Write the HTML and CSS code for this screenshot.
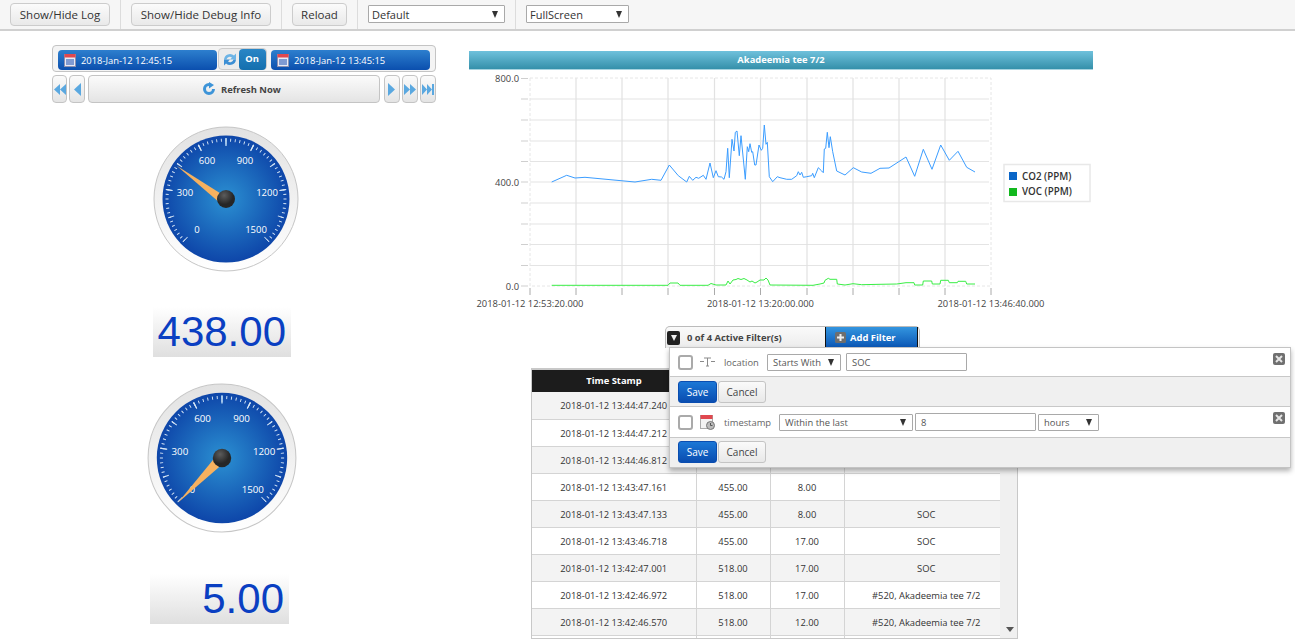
FILE: index.html
```html
<!DOCTYPE html>
<html lang="en">
<head>
    <meta charset="UTF-8">
    <title>Dashboard</title>
    <link rel="stylesheet" href="styles.css">
</head>
<body>
<svg class="defs" width="0" height="0">
    <defs>
        <linearGradient id="bezel" x1="0" y1="0" x2="0" y2="1">
            <stop offset="0" stop-color="#e2e2e2"/>
            <stop offset="1" stop-color="#ffffff"/>
        </linearGradient>
        <radialGradient id="dial">
            <stop offset="0" stop-color="#2b90d2"/>
            <stop offset="1" stop-color="#0e46a9"/>
        </radialGradient>
        <radialGradient id="hub" cx="0.4" cy="0.3">
            <stop offset="0" stop-color="#5c5c5c"/>
            <stop offset="1" stop-color="#262626"/>
        </radialGradient>
        <symbol id="gauge-face" viewBox="0 0 150 150">
            <circle cx="75" cy="75" r="72" fill="url(#bezel)" stroke="#c6c6c6"/>
            <circle cx="75" cy="75" r="63.5" fill="url(#dial)"/>
            <!-- ticks are dashes along one arc: -135deg to 135deg -->
            <path class="tick" d="M33.28 116.72A59 59 0 1 1 116.72 116.72" pathLength="60" stroke-width="3" stroke-dasharray="0.2 0.8" stroke-dashoffset="0.1"/>
            <path class="tick" d="M34.34 115.66A57.5 57.5 0 1 1 115.66 115.66" pathLength="10" stroke-width="6" stroke-dasharray="0.04 0.96" stroke-dashoffset="0.02"/>
            <path class="tick" d="M34.34 115.66A57.5 57.5 0 1 1 115.66 115.66" pathLength="5" stroke-width="7" stroke-dasharray="0.02 0.98" stroke-dashoffset="0.01"/>
            <path d="M75 14V22" stroke="#a9cdee" stroke-width="1.5"/>
            <text class="gauge-num" x="46" y="109">0</text>
            <text class="gauge-num" x="34" y="72">300</text>
            <text class="gauge-num" x="56" y="40">600</text>
            <text class="gauge-num" x="94" y="40">900</text>
            <text class="gauge-num" x="116" y="72">1200</text>
            <text class="gauge-num" x="105" y="109">1500</text>
        </symbol>
        <symbol id="cal" viewBox="0 0 12 14">
            <rect x="0.5" y="1.5" width="11" height="12" fill="#e8eaf4" stroke="#8c90b0"/>
            <rect x="0.5" y="1" width="11" height="3.5" fill="#e0484f"/>
            <rect x="2" y="6" width="8" height="6" fill="#7f9ad2"/>
        </symbol>
    </defs>
</svg>

<div class="toolbar">
    <div class="tool-group"><button class="btn w-log">Show/Hide Log</button></div>
    <div class="tool-group"><button class="btn w-debug">Show/Hide Debug Info</button></div>
    <div class="tool-group"><button class="btn w-reload">Reload</button></div>
    <div class="tool-group"><div class="sel tool-sel w-default">Default</div></div>
    <div class="tool-group no-line"><div class="sel tool-sel w-full">FullScreen</div></div>
</div>

<div class="main">
    <div class="left">
        <div class="time-bar">
            <div class="date-btn">
                <svg class="cal-icon"><use href="#cal"/></svg>
                <span>2018-Jan-12 12:45:15</span>
            </div>
            <div class="auto-toggle">
                <svg class="sync-icon" viewBox="0 0 16 16">
                    <path d="M2 8a6 6 0 0 1 10-4l2-2v6H8l2-2a3.5 3.5 0 0 0-5.500 2z" fill="#6db4e6"/>
                    <path d="M14 8a6 6 0 0 1-10 4l-2 2V8h6l-2 2a3.500 3.500 0 0 0 5.500-2z" fill="#3d8fd4"/>
                </svg>
                <span class="on">On</span>
            </div>
            <div class="date-btn">
                <svg class="cal-icon"><use href="#cal"/></svg>
                <span>2018-Jan-12 13:45:15</span>
            </div>
        </div>
        <div class="nav-row">
            <div class="nav-btn w-15">
                <svg width="12" height="11" viewBox="0 0 12 11"><path class="arrow" d="M6 0V11L0 5.500ZM12 0V11L6 5.500Z"/></svg>
            </div>
            <div class="nav-btn w-16">
                <svg width="7" height="13" viewBox="0 0 7 13"><path class="arrow" d="M7 0V13L0 6.500Z"/></svg>
            </div>
            <div class="nav-btn refresh">
                <svg width="14" height="14" viewBox="0 0 14 14"><path d="M7 1a6 6 0 1 0 6 6H10a3 3 0 1 1-3-3V6.500L12 3 7 0Z" fill="#3d94d8"/></svg>
                <span>Refresh Now</span>
            </div>
            <div class="nav-btn w-16">
                <svg width="7" height="13" viewBox="0 0 7 13"><path class="arrow" d="M0 0V13L7 6.500Z"/></svg>
            </div>
            <div class="nav-btn w-16">
                <svg width="12" height="11" viewBox="0 0 12 11"><path class="arrow" d="M0 0V11L6 5.500ZM6 0V11L12 5.500Z"/></svg>
            </div>
            <div class="nav-btn w-16">
                <svg width="12" height="11" viewBox="0 0 12 11"><path class="arrow" d="M0 0V11L5 5.500ZM5 0V11L10 5.500Z"/><rect class="arrow" x="10" width="2" height="11"/></svg>
            </div>
        </div>

        <svg class="gauge gauge-one" viewBox="0 0 150 150">
            <use href="#gauge-face"/>
            <polygon class="needle" points="25.700,41.700 72,71 69,79"/>
            <circle cx="75" cy="75" r="9" fill="url(#hub)"/>
        </svg>
        <div class="lcd lcd-one">438.00</div>

        <svg class="gauge gauge-two" viewBox="0 0 150 150">
            <use href="#gauge-face"/>
            <polygon class="needle" points="32,118.500 71,71 79,78"/>
            <circle cx="75" cy="75" r="9" fill="url(#hub)"/>
        </svg>
        <div class="lcd lcd-two">5.00</div>
    </div>

    <div class="right">
        <div class="chart-title">Akadeemia tee 7/2</div>
        <svg class="chart" width="624" height="243" viewBox="469 70 624 243">
            <g class="grid-h">
                <path d="M530 99H989M530 120H989M530 141H989M530 161.500H989M530 182H989M530 203H989M530 224H989M530 244.500H989M530 265.500H989"/>
            </g>
            <g class="grid-v">
                <path d="M576 78V286M622 78V286M668 78V286M714.500 78V286M760.500 78V286M807 78V286M853 78V286M899 78V286M945 78V286"/>
            </g>
            <path class="grid-edge" d="M530 78H991V286H530Z"/>
            <path class="tick-y" d="M521 78.500H528M521 99H528M521 120H528M521 141H528M521 161.500H528M521 182H528M521 203H528M521 224H528M521 244.500H528M521 265.500H528M521 286H528"/>
            <path class="tick-x" d="M530 288V295M576 288V295M622 288V295M668 288V295M714.500 288V295M760.500 288V295M807 288V295M853 288V295M899 288V295M945 288V295M991 288V295"/>
            <text class="axis end" x="519" y="82">800.0</text>
            <text class="axis end" x="519" y="186">400.0</text>
            <text class="axis end" x="519" y="290">0.0</text>
            <text class="axis mid" x="530" y="307">2018-01-12 12:53:20.000</text>
            <text class="axis mid" x="760.500" y="307">2018-01-12 13:20:00.000</text>
            <text class="axis mid" x="991" y="307">2018-01-12 13:46:40.000</text>
            <polyline class="line-co2" points="551.700,182 566.700,175.300 575,178 585,177.300 635,182 651.700,179.300 661,180.300 669.300,165 678.300,175.700 686.700,182 689.300,176.300 692.700,180.300 696,177.300 698.700,178.300 703.300,175.300 706,179.300 710,163 713.300,177.700 716,170.700 718.300,176.700 721.500,177 724,179.300 726,171.700 727.700,148.300 729.300,177.700 732,139.300 734,151 735.300,132.300 737,131 739.300,155.700 741,135.700 745.300,179.300 747.300,146.700 748.700,151.700 750,143.700 751.700,152.300 752.700,151.700 754.700,165 756,165 759,145 761.300,150.300 762.700,148.300 764.300,125 766,144.300 767.300,142.300 769.300,176.700 772.700,181.700 777.300,176.700 780,177.700 786.700,179.300 791.700,179.300 796.700,175.700 798.300,171.700 800,175 801.700,172.300 803.300,177.300 806.700,176.700 811.700,175.700 812.700,173.300 814.300,177.700 818.300,167.700 821.700,171 823.300,172.700 824.300,149 825.700,148.300 827.300,132.300 829,147.700 830.300,136.700 832.700,151.700 836.700,171 845,175 853.300,167.700 861.700,172 871,173.300 880,168.300 889,168 906,157 914.700,176.300 923.300,149.300 932,169.300 940.700,145 949.300,160.300 958,151.300 966.700,167.300 975,172"/>
            <polyline class="line-voc" points="551.700,285.300 668,285.300 670,283 678,283 680,285.300 708,285.300 711,283.500 716,285 726,285 728,281 730,284 733,280 736,279.500 738,278.500 741,279.500 744,278.500 747,280 750,282 752,281 755,283 757,282 760,280 764,280 766,278 768,280 770,285 813,285.300 820,284 824,283 825,280.300 828.300,278.300 830,279.300 836.700,279.300 837.300,284 845,285 853,283.700 861.700,284.700 880,284.300 896.700,284 906,282.700 914,282.700 914.700,285 922.700,285 923.300,281 931.700,281 932.300,284 940,284 940.700,280.300 948.300,280.300 949.300,282.700 957.300,282.700 958,281.300 965.700,281.300 966.700,284 975,284"/>
            <rect class="legend-box" x="1004" y="164.500" width="86" height="37"/>
            <rect x="1009" y="172" width="8" height="8" fill="#0a66c8"/>
            <rect x="1009" y="188" width="8" height="8" fill="#12b81e"/>
            <text class="legend-text" x="1022" y="179.500">CO2 (PPM)</text>
            <text class="legend-text" x="1022" y="195">VOC (PPM)</text>
        </svg>

        <div class="filter-area">
            <div class="filter-bar">
                <div class="collapse"><i></i></div>
                <div class="filter-count">0 of 4 Active Filter(s)</div>
                <div class="add-filter">
                    <svg width="11" height="11" viewBox="0 0 11 11"><rect width="11" height="11" rx="1.500" fill="#6e6e6e"/><path d="M5.500 2V9M2 5.500H9" stroke="#eee" stroke-width="2"/></svg>
                    <span>Add Filter</span>
                </div>
            </div>
            <div class="filter-pop">
                <div class="filter-row row-one">
                    <span class="check"></span>
                    <svg class="field-icon" width="15" height="10" viewBox="0 0 15 10"><path d="M0 4.500H4M11 4.500H15M4 1H11M7.500 1V9M6 9H9" stroke="#8a8a8a" fill="none"/></svg>
                    <span class="field-name f-location">location</span>
                    <div class="sel w-op1">Starts With</div>
                    <div class="input w-input">SOC</div>
                    <span class="close"><svg width="12" height="12" viewBox="0 0 12 12"><rect width="12" height="12" rx="2" fill="#707070"/><path d="M3 3L9 9M9 3L3 9" stroke="#e6e6e6" stroke-width="2"/></svg></span>
                </div>
                <div class="filter-actions">
                    <button class="save">Save</button><button class="cancel">Cancel</button>
                </div>
                <div class="filter-row row-two">
                    <span class="check"></span>
                    <svg class="field-icon" width="15" height="16" viewBox="0 0 15 16"><rect x="0.500" y="1.500" width="12" height="13" fill="#f2f2f2" stroke="#aaa"/><rect x="0.500" y="1" width="12" height="4" fill="#e0484f"/><circle cx="10.500" cy="11.500" r="4" fill="#bbb" stroke="#777"/><path d="M10.500 9V11.500H12.500" stroke="#555" fill="none"/></svg>
                    <span class="field-name f-time">timestamp</span>
                    <div class="sel w-op2">Within the last</div>
                    <div class="input w-input tight">8</div>
                    <div class="sel w-unit">hours</div>
                    <span class="close"><svg width="12" height="12" viewBox="0 0 12 12"><rect width="12" height="12" rx="2" fill="#707070"/><path d="M3 3L9 9M9 3L3 9" stroke="#e6e6e6" stroke-width="2"/></svg></span>
                </div>
                <div class="filter-actions">
                    <button class="save">Save</button><button class="cancel">Cancel</button>
                </div>
            </div>
        </div>

        <div class="grid-wrap">
            <table class="data-grid">
                <thead>
                    <tr><th class="c-time">Time Stamp</th><th class="c-num"></th><th class="c-num"></th><th></th></tr>
                </thead>
                <tbody>
                    <tr><td>2018-01-12 13:44:47.240</td><td></td><td></td><td></td></tr>
                    <tr><td>2018-01-12 13:44:47.212</td><td></td><td></td><td></td></tr>
                    <tr><td>2018-01-12 13:44:46.812</td><td></td><td></td><td></td></tr>
                    <tr><td>2018-01-12 13:43:47.161</td><td>455.00</td><td>8.00</td><td></td></tr>
                    <tr><td>2018-01-12 13:43:47.133</td><td>455.00</td><td>8.00</td><td>SOC</td></tr>
                    <tr><td>2018-01-12 13:43:46.718</td><td>455.00</td><td>17.00</td><td>SOC</td></tr>
                    <tr><td>2018-01-12 13:42:47.001</td><td>518.00</td><td>17.00</td><td>SOC</td></tr>
                    <tr><td>2018-01-12 13:42:46.972</td><td>518.00</td><td>17.00</td><td>#520, Akadeemia tee 7/2</td></tr>
                    <tr><td>2018-01-12 13:42:46.570</td><td>518.00</td><td>12.00</td><td>#520, Akadeemia tee 7/2</td></tr>
                    <tr><td></td><td></td><td></td><td></td></tr>
                </tbody>
            </table>
            <i class="scroll-down"></i>
        </div>
    </div>
</div>
</body>
</html>
```
FILE: styles.css
```css
* {
    margin: 0;
    padding: 0;
    box-sizing: border-box;
}

html, body {
    height: 642px;
    overflow: hidden;
}

body {
    background: #fff;
    font-family: "Open Sans", "Liberation Sans", sans-serif;
    font-size: 9.400px;
    color: #333;
}

.defs {
    position: absolute;
}

/* top toolbar */
.toolbar {
    display: flex;
    height: 31px;
    background: #f6f6f6;
    border-bottom: 2px solid #d0d0d0;
}

.tool-group {
    display: flex;
    align-items: flex-start;
    padding: 3px 10px 0;
    border-right: 1px solid #dcdcdc;
}

.no-line {
    border-right: 0;
}

.btn {
    height: 23px;
    font: 11.500px "Open Sans", sans-serif;
    color: #333;
    background: linear-gradient(#fbfbfb, #e9e9e9);
    border: 1px solid #ccc;
    border-radius: 4px;
}

.w-log { width: 100px; }
.w-debug { width: 140px; }
.w-reload { width: 55px; }
.w-default { width: 137px; }
.w-full { width: 103px; }

.sel, .input {
    display: flex;
    align-items: center;
    height: 17px;
    padding-left: 5px;
    background: #fff;
    border: 1px solid #a9a9a9;
    border-radius: 1px;
    color: #555;
}

.sel {
    justify-content: space-between;
    padding-right: 6px;
}

.sel::after {
    content: "";
    border-top: 7px solid #333;
    border-left: 3px solid transparent;
    border-right: 3px solid transparent;
}

.tool-sel {
    height: 18px;
    margin-top: 2px;
    padding-left: 3px;
    font-size: 11px;
    color: #333;
}

/* page columns */
.main {
    display: flex;
}

.left {
    width: 384px;
    margin-left: 52px;
    padding-top: 14px;
}

.right {
    width: 826px;
    margin-left: 33px;
    padding-top: 20px;
}

/* time range */
.time-bar {
    display: flex;
    align-items: flex-start;
    justify-content: space-between;
    height: 27px;
    padding: 2px 5px 0;
    background: #f4f4f4;
    border: 1px solid #c4c4c4;
    border-radius: 4px;
}

.date-btn {
    display: flex;
    align-items: center;
    width: 159px;
    height: 20px;
    margin-top: 2px;
    padding-left: 6px;
    gap: 5px;
    color: #fff;
    background: linear-gradient(#2d7fce, #0b4fae);
    border-radius: 4px;
}

.cal-icon {
    width: 12px;
    height: 14px;
}

.auto-toggle {
    display: flex;
    align-items: center;
    justify-content: space-between;
    width: 49px;
    height: 22px;
    margin-right: 4px;
    padding-left: 3px;
    background: #ececec;
    border: 1px solid #ccc;
    border-radius: 4px;
}

.sync-icon {
    width: 16px;
    height: 17px;
}

.on {
    width: 27px;
    height: 21px;
    line-height: 19px;
    text-align: center;
    font-weight: 700;
    color: #fff;
    background: linear-gradient(#2a86c6, #146fae);
    border-radius: 4px;
}

.nav-row {
    display: flex;
    justify-content: space-between;
    height: 28px;
    margin-top: 3px;
}

.nav-btn {
    display: flex;
    align-items: center;
    justify-content: center;
    background: linear-gradient(#fbfbfb, #e4e4e4);
    border: 1px solid #c4c4c4;
    border-radius: 4px;
}

.w-15 { width: 15px; }
.w-16 { width: 16px; }

.refresh {
    width: 292px;
    margin: 0 1px;
    padding-left: 14px;
    gap: 5px;
    font-weight: 700;
    color: #444;
}

.arrow {
    fill: #5aa8e0;
}

/* gauges */
.gauge {
    display: block;
    width: 150px;
    height: 150px;
}

.gauge-one {
    margin: 21px 0 0 99px;
}

.gauge-two {
    width: 154px;
    height: 154px;
    margin: 24px 0 0 93px;
}

.tick {
    fill: none;
    stroke: #d6e6f5;
}

.gauge-num {
    font-size: 9.500px;
    fill: #fff;
    text-anchor: middle;
}

.needle {
    fill: #f6b15f;
}

.lcd {
    width: 138px;
    height: 50px;
    padding-right: 5px;
    font: 42px/50px "Liberation Sans", sans-serif;
    text-align: right;
    color: #0a3fc2;
    background: linear-gradient(#fff, #dfdfdf);
}

.lcd-one {
    margin: 33px 0 0 101px;
}

.lcd-two {
    width: 139px;
    margin: 39px 0 0 98px;
}

/* chart */
.chart-title {
    width: 624px;
    height: 19px;
    line-height: 18px;
    text-align: center;
    font-weight: 700;
    color: #fff;
    background: linear-gradient(#6fc1dc, #3590aa);
    border-bottom: 1px solid #a8d4e0;
}

.chart {
    display: block;
}

.grid-h path {
    fill: none;
    stroke: #e4e4e4;
    stroke-width: 1.200;
}

.grid-v path {
    fill: none;
    stroke: #e2e2e2;
    stroke-width: 1.200;
}

.grid-edge {
    fill: none;
    stroke: #e6e6e6;
    stroke-dasharray: 3 2;
}

.tick-y {
    fill: none;
    stroke: #cfcfcf;
}

.tick-x {
    fill: none;
    stroke: #aaa;
}

.axis {
    font-size: 9.400px;
    fill: #444;
}

.end { text-anchor: end; }
.mid { text-anchor: middle; }

.line-co2 {
    fill: none;
    stroke: #3b9dff;
}

.line-voc {
    fill: none;
    stroke: #39ee45;
}

.legend-box {
    fill: #fff;
    stroke: #e8e8e8;
    stroke-width: 1.500;
}

.legend-text {
    font-size: 9.800px;
    font-weight: 600;
    fill: #333;
}

/* filters */
.filter-area {
    position: relative;
    width: 255px;
    height: 22px;
    margin: 13px 0 0 196px;
}

.filter-bar {
    display: flex;
    align-items: stretch;
    height: 22px;
    background: linear-gradient(#fafafa, #ececec);
    border: 1px solid #bbb;
    border-bottom: 0;
    border-radius: 5px 5px 0 0;
}

.collapse {
    display: flex;
    align-items: center;
    justify-content: center;
    width: 13px;
    height: 14px;
    margin: 4px 0 0 1px;
    background: #222;
    border-radius: 2px;
}

.collapse i {
    border-top: 6px solid #eee;
    border-left: 3.500px solid transparent;
    border-right: 3.500px solid transparent;
}

.filter-count {
    width: 145px;
    padding: 4px 0 0 7px;
    font-weight: 700;
    color: #444;
}

.add-filter {
    display: flex;
    align-items: center;
    width: 93px;
    padding-left: 9px;
    gap: 4px;
    font-weight: 700;
    color: #fff;
    background: linear-gradient(#3395df, #0a55b4);
    border-left: 1px solid #111;
    border-right: 1px solid #111;
}

.filter-pop {
    position: absolute;
    top: 21px;
    left: 4px;
    z-index: 2;
    width: 622px;
    height: 121px;
    background: #fff;
    border: 1px solid #c4c4c4;
    box-shadow: 0 3px 5px rgba(0, 0, 0, 0.3);
}

.filter-row {
    position: relative;
    display: flex;
    align-items: center;
    padding-left: 8px;
}

.row-one { height: 28px; }
.row-two { height: 30px; }

.check {
    width: 15px;
    height: 15px;
    background: #fff;
    border: 2px solid #aaa;
    border-radius: 3px;
}

.field-icon {
    margin-left: 7px;
}

.field-name {
    margin-left: 9px;
    color: #666;
}

.f-location { width: 43px; }
.f-time { width: 55px; }

.w-op1 { width: 74px; }
.w-op2 { width: 134px; }
.w-unit { width: 61px; margin-left: 2px; }

.w-input {
    width: 121px;
    height: 18px;
    margin-left: 5px;
}

.tight {
    margin-left: 2px;
}

.close {
    position: absolute;
    top: 5px;
    right: 5px;
    line-height: 0;
}

.filter-actions {
    height: 31px;
    padding: 4px 0 0 8px;
    background: #f0f0f0;
    border-top: 1px solid #c8c8c8;
    border-bottom: 1px solid #c8c8c8;
}

.filter-actions:last-child {
    height: 30px;
    padding-top: 3px;
    border-bottom: 0;
}

.save, .cancel {
    height: 22px;
    font: 10px "Open Sans", sans-serif;
    border-radius: 3px;
}

.save {
    width: 39px;
    color: #fff;
    background: linear-gradient(#1b77d6, #0a4db0);
    border: 1px solid #0a4db0;
}

.cancel {
    width: 48px;
    margin-left: 1px;
    color: #444;
    background: linear-gradient(#fafafa, #e8e8e8);
    border: 1px solid #c4c4c4;
}

/* data table */
.grid-wrap {
    position: relative;
    width: 487px;
    height: 271px;
    margin: 20px 0 0 62px;
    overflow: hidden;
    background: #f0f0f0;
    border: 1px solid #c8c8c8;
    border-top-width: 2px;
}

.data-grid {
    width: 468px;
    border-collapse: collapse;
    table-layout: fixed;
    background: #fff;
}

.data-grid th {
    height: 22px;
    padding-bottom: 1px;
    font-weight: 700;
    color: #fff;
    background: #1c1c1c;
}

.c-time { width: 164px; }
.c-num { width: 74px; }

.data-grid td {
    height: 27px;
    padding-top: 1px;
    text-align: center;
    border-right: 1px solid #d4d4d4;
    border-bottom: 1px solid #d4d4d4;
}

.data-grid td:last-child {
    padding-left: 8px;
    border-right: 0;
}

.data-grid tbody tr:nth-child(odd) {
    background: #f3f3f3;
}

.scroll-down {
    position: absolute;
    right: 3px;
    bottom: 6px;
    border-top: 5px solid #555;
    border-left: 4px solid transparent;
    border-right: 4px solid transparent;
}
```
